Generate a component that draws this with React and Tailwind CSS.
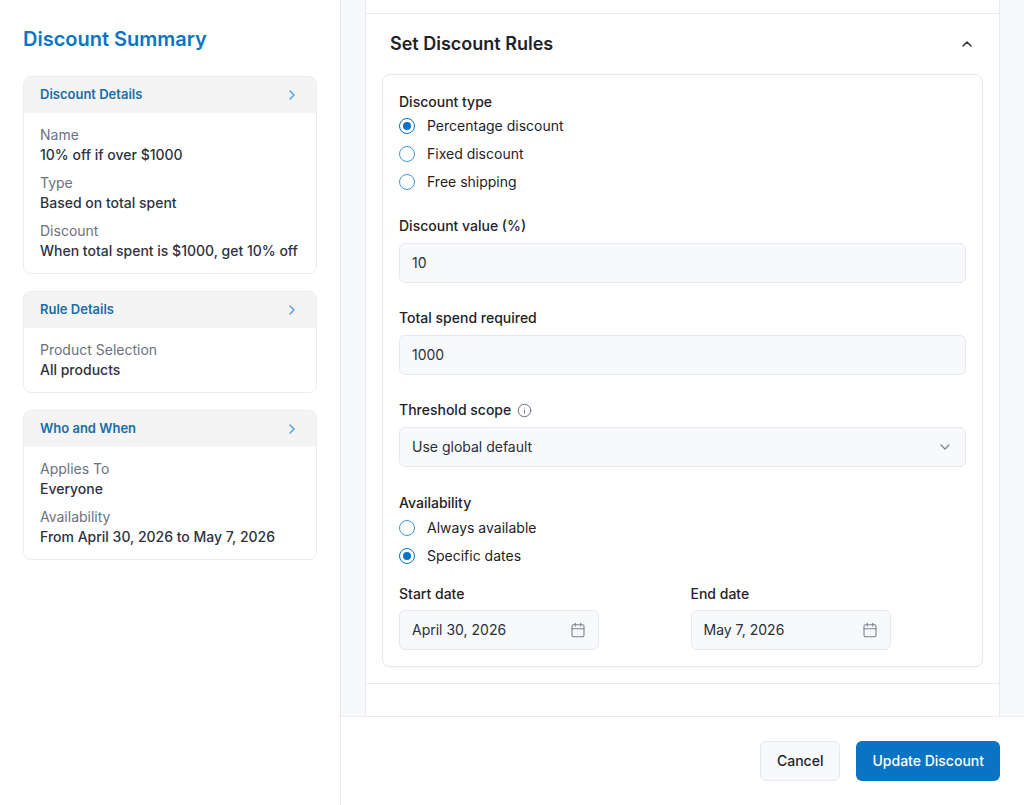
import React, { useState } from "react";
import { ChevronRight, ChevronUp, ChevronDown, Info, Calendar } from "lucide-react";

const SUMMARY = [
    {
        title: "Discount Details",
        rows: [
            { label: "Name", value: "10% off if over $1000" },
            { label: "Type", value: "Based on total spent" },
            { label: "Discount", value: "When total spent is $1000, get 10% off" },
        ],
    },
    {
        title: "Rule Details",
        rows: [{ label: "Product Selection", value: "All products" }],
    },
    {
        title: "Who and When",
        rows: [
            { label: "Applies To", value: "Everyone" },
            { label: "Availability", value: "From April 30, 2026 to May 7, 2026" },
        ],
    },
];

function SummaryCard({ title, rows }) {
    return (
        <div className="rounded-lg border border-[#ececee] bg-white overflow-hidden">
            <div className="h-9 bg-[#f4f4f5] px-4 flex items-center justify-between">
                <span className="text-[13px] font-semibold text-[#1b6ca8]">{title}</span>
                <ChevronRight className="w-4 h-4 text-[#4a9de0]" strokeWidth={2} />
            </div>
            <div className="px-4 py-3 flex flex-col gap-2">
                {rows.map((r) => (
                    <div key={r.label}>
                        <div className="text-sm leading-5 text-[#6b7280]">{r.label}</div>
                        <div className="text-sm leading-5 font-medium text-[#2d3340]">{r.value}</div>
                    </div>
                ))}
            </div>
        </div>
    );
}

function Radio({ checked, label, onClick }) {
    return (
        <label className="flex items-center gap-3 h-5 cursor-pointer" onClick={onClick}>
            <span
                className={
                    checked
                        ? "w-4 h-4 rounded-full border-[1.5px] border-[#0a73c6] flex items-center justify-center"
                        : "w-4 h-4 rounded-full border-[1.5px] border-[#3e97d8]"
                }
            >
                {checked && <span className="w-2 h-2 rounded-full bg-[#0a73c6]" />}
            </span>
            <span className="text-sm text-[#1f2328]">{label}</span>
        </label>
    );
}

function Field({ value, icon, className = "" }) {
    return (
        <div className={"h-10 rounded-md border border-[#e6e8ee] bg-[#f8f9fb] px-3 flex items-center justify-between " + className}>
            <span className="text-sm text-[#2b2f36]">{value}</span>
            {icon}
        </div>
    );
}

export default function App() {
    const [type, setType] = useState("percentage");
    const [avail, setAvail] = useState("specific");

    return (
        <div className="flex h-[805px] w-full overflow-hidden bg-white font-['Inter',sans-serif]">
            {/* sidebar */}
            <aside className="w-[341px] shrink-0 border-r border-[#e8eaef] px-[23px] pt-[25px]">
                <h1 className="text-xl leading-7 font-semibold text-[#0a74c4] mb-[23px]">Discount Summary</h1>
                <div className="flex flex-col gap-[17px]">
                    {SUMMARY.map((c) => (
                        <SummaryCard key={c.title} {...c} />
                    ))}
                </div>
            </aside>

            {/* main */}
            <div className="flex-1 flex flex-col min-w-0">
                <div className="flex-1 overflow-hidden bg-[#f8f9fb] px-6">
                    <div className="bg-white border-x border-[#e8eaef]">
                        <div className="h-[14px] border-b border-[#e8eaef]" />
                        <div className="border-b border-[#e8eaef]">
                            <div className="px-6 py-4 flex items-center justify-between">
                                <h2 className="text-lg leading-7 font-semibold text-[#1f2328]">Set Discount Rules</h2>
                                <ChevronUp className="w-4 h-4 text-[#2b2f36]" strokeWidth={2.2} />
                            </div>
                            <div className="px-4 pb-4">
                                <div className="rounded-lg border border-[#e6e8ee] px-4 pt-[17px] pb-4 shadow-[0_1px_1px_rgba(0,0,0,0.03)]">
                                    <div className="text-sm leading-5 font-medium text-[#1f2328]">Discount type</div>
                                    <div className="mt-1 flex flex-col gap-2">
                                        <Radio checked={type === "percentage"} label="Percentage discount" onClick={() => setType("percentage")} />
                                        <Radio checked={type === "fixed"} label="Fixed discount" onClick={() => setType("fixed")} />
                                        <Radio checked={type === "shipping"} label="Free shipping" onClick={() => setType("shipping")} />
                                    </div>

                                    <div className="mt-6 text-sm leading-5 font-medium text-[#1f2328]">Discount value (%)</div>
                                    <Field value="10" className="mt-[7px]" />

                                    <div className="mt-[25px] text-sm leading-5 font-medium text-[#1f2328]">Total spend required</div>
                                    <Field value="1000" className="mt-[7px]" />

                                    <div className="mt-[25px] text-sm leading-5 font-medium text-[#1f2328] flex items-center gap-1.5">
                                        Threshold scope
                                        <Info className="w-[15px] h-[15px] text-[#6b7280]" strokeWidth={1.6} />
                                    </div>
                                    <Field
                                        value="Use global default"
                                        className="mt-[7px]"
                                        icon={<ChevronDown className="w-4 h-4 text-[#7b818c]" strokeWidth={1.8} />}
                                    />

                                    <div className="mt-[26px] text-sm leading-5 font-medium text-[#1f2328]">Availability</div>
                                    <div className="mt-[5px] flex flex-col gap-2">
                                        <Radio checked={avail === "always"} label="Always available" onClick={() => setAvail("always")} />
                                        <Radio checked={avail === "specific"} label="Specific dates" onClick={() => setAvail("specific")} />
                                    </div>

                                    <div className="mt-[18px] grid grid-cols-2 gap-4">
                                        <div>
                                            <div className="text-sm leading-5 font-medium text-[#1f2328]">Start date</div>
                                            <Field
                                                value="April 30, 2026"
                                                className="mt-[6px] w-[200px]"
                                                icon={<Calendar className="w-4 h-4 text-[#7b818c]" strokeWidth={1.6} />}
                                            />
                                        </div>
                                        <div>
                                            <div className="text-sm leading-5 font-medium text-[#1f2328]">End date</div>
                                            <Field
                                                value="May 7, 2026"
                                                className="mt-[6px] w-[200px]"
                                                icon={<Calendar className="w-4 h-4 text-[#7b818c]" strokeWidth={1.6} />}
                                            />
                                        </div>
                                    </div>
                                </div>
                            </div>
                        </div>
                        <div className="h-16" />
                    </div>
                </div>

                {/* footer */}
                <div className="h-[89px] shrink-0 border-t border-[#e8eaef] bg-white px-6 flex items-center justify-end gap-4">
                    <button className="h-10 px-4 rounded-md border border-[#e6e8ee] bg-[#f8f9fb] text-sm font-medium text-[#1f2328]">
                        Cancel
                    </button>
                    <button className="h-10 px-4 rounded-md bg-[#0a74c4] text-sm font-medium text-white">
                        Update Discount
                    </button>
                </div>
            </div>
        </div>
    );
}
